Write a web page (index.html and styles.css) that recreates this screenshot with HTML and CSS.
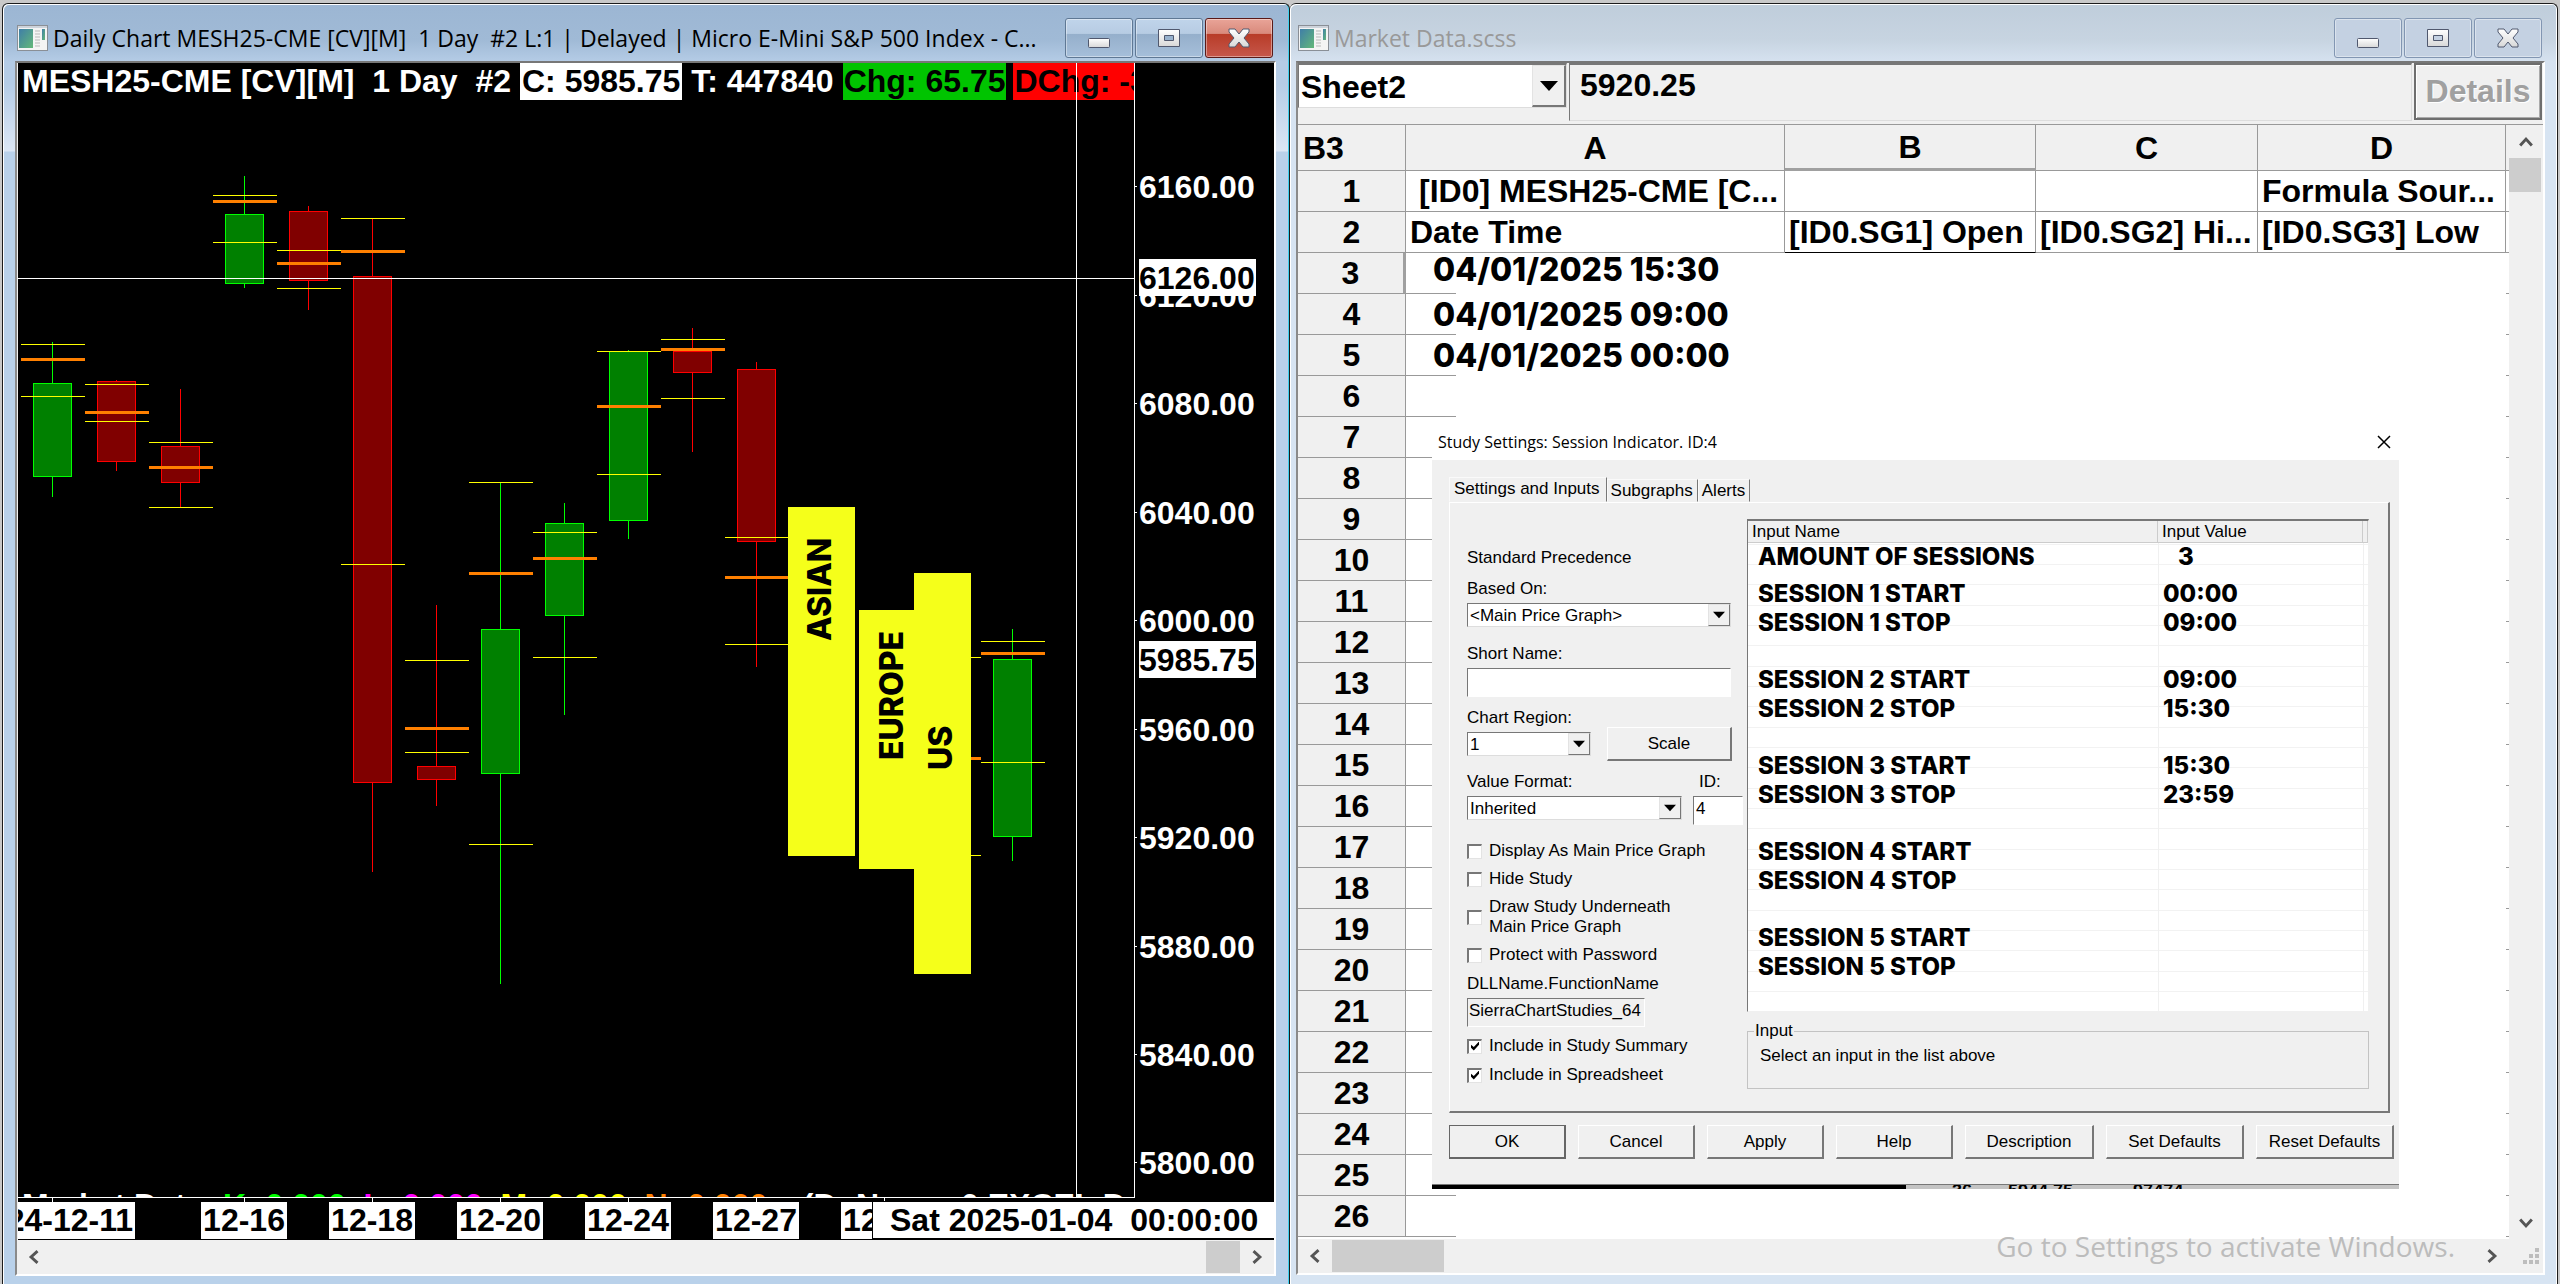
FILE: index.html
```
<!DOCTYPE html>
<html lang="en">
<head>
<meta charset="utf-8">
<title>Daily Chart and Market Data</title>
<link rel="stylesheet" href="styles.css">
</head>
<body>
<svg class="defs" width="0" height="0" aria-hidden="true">
  <defs>
    <linearGradient id="pane" x1="0" y1="0" x2="1" y2="1"><stop offset="0" stop-color="#3f7ea8"/><stop offset="1" stop-color="#63b878"/></linearGradient>
    <linearGradient id="metal" x1="0" y1="0" x2="0" y2="1"><stop offset="0" stop-color="#ffffff"/><stop offset="1" stop-color="#d8d8d8"/></linearGradient>
    <symbol id="app" viewBox="0 0 31 26">
      <rect x="0.5" y="0.5" width="30" height="25" fill="#f4f4f4" stroke="#8a8f96"/>
      <rect x="1" y="1" width="29" height="2" fill="#cdd3db"/>
      <rect x="2" y="4" width="14" height="19" fill="url(#pane)"/>
      <path d="M18 6h5M18 9h5M18 12h5M18 15h5M18 18h5M18 21h5" stroke="#b9b9b9"/>
      <rect x="25" y="4" width="3" height="11" fill="url(#pane)"/>
    </symbol>
    <symbol id="min" viewBox="0 0 22 20"><rect x="0.5" y="10.5" width="21" height="9" rx="1" fill="url(#metal)" stroke="#50586e"/></symbol>
    <symbol id="max" viewBox="0 0 22 20"><path d="M0.5 1.5h21v17h-21zM6.5 7.5v5h9v-5z" fill="url(#metal)" fill-rule="evenodd" stroke="#50586e"/></symbol>
    <symbol id="close" viewBox="0 0 22 20"><path d="M1 1h6l4 5 4-5h6v3l-5 6 5 6v3h-6l-4-5-4 5H1v-3l5-6-5-6z" fill="url(#metal)" stroke="#50586e"/></symbol>
    <symbol id="drop" viewBox="0 0 18 10"><path d="M0 0h18L9 10z"/></symbol>
    <symbol id="chev" viewBox="0 0 12 12"><path d="M9 1L3.500 6L9 11" fill="none" stroke="#555" stroke-width="2.500"/></symbol>
  </defs>
</svg>
<main class="desktop">
  <section class="window active">
    <header class="titlebar">
      <svg class="appicon" aria-hidden="true"><use href="#app"/></svg>
      <h1>Daily Chart MESH25-CME [CV][M]&nbsp; 1 Day&nbsp; #2 L:1 | Delayed | Micro E-Mini S&amp;P 500 Index - C...</h1>
      <div class="controls">
        <button aria-label="Minimize"><svg><use href="#min"/></svg></button>
        <button aria-label="Maximize"><svg><use href="#max"/></svg></button>
        <button class="close" aria-label="Close"><svg><use href="#close"/></svg></button>
      </div>
    </header>
    <div class="client">
      <div class="chart">
        <div class="plot">
          <div class="readout"><span>MESH25-CME [CV][M]  1 Day  #2</span><span class="last">C: 5985.75</span><span>T: 447840</span><span class="up">Chg: 65.75</span><span class="down">DChg: -30.00</span></div>
          <svg class="canvas" id="candles" role="img" aria-label="Daily candles with sessions"></svg>
          <div class="study"><span>Market Data: </span><span class="k">K: 0.000  </span><span class="l">L: 0.000  </span><span class="m">M: 0.000  </span><span class="n">N: 0.000    </span><span>(D: Name  0 EXCEL D</span></div>
        </div>
        <svg class="scale" id="scale"></svg>
        <div class="dates">
          <span class="tick"><b>2024-12-11</b></span><span class="skip"></span><span class="tick"><b>12-16</b></span><span class="tick"><b>12-18</b></span><span class="tick"><b>12-20</b></span><span class="tick"><b>12-24</b></span><span class="tick"><b>12-27</b></span><span class="tick"><b>12-31</b></span>
          <output class="cursor">Sat 2025-01-04  00:00:00</output>
        </div>
      </div>
      <div class="hbar">
        <button aria-label="Scroll left"><svg><use href="#chev"/></svg></button>
        <i class="thumb end"></i>
        <button class="flip" aria-label="Scroll right"><svg><use href="#chev"/></svg></button>
      </div>
    </div>
  </section>

  <section class="window inactive">
    <header class="titlebar">
      <svg class="appicon" aria-hidden="true"><use href="#app"/></svg>
      <h1>Market Data.scss</h1>
      <div class="controls">
        <button aria-label="Minimize"><svg><use href="#min"/></svg></button>
        <button aria-label="Maximize"><svg><use href="#max"/></svg></button>
        <button aria-label="Close"><svg><use href="#close"/></svg></button>
      </div>
    </header>
    <div class="client">
      <div class="formula">
        <span class="combo sheetname"><select aria-label="Sheet"><option>Sheet2</option></select><span class="drop"><svg><use href="#drop"/></svg></span></span>
        <input class="value" aria-label="Cell value" value="5920.25">
        <button class="details" disabled>Details</button>
      </div>
      <div class="sheet">
        <div class="grid">
          <table class="cells" id="cells">
            <colgroup><col class="c0"><col class="ca"><col class="cb"><col class="cc"><col class="cd"><col></colgroup>
            <thead><tr><th class="ref">B3</th><th>A</th><th class="sel">B</th><th>C</th><th>D</th><th></th></tr></thead>
            <tbody>
              <tr class="lined"><th>1</th><td class="indent">[ID0] MESH25-CME [C...</td><td></td><td></td><td>Formula Sour...</td><td></td></tr>
              <tr class="lined"><th>2</th><td>Date Time</td><td class="cellsel">[ID0.SG1] Open</td><td>[ID0.SG2] Hi...</td><td>[ID0.SG3] Low</td><td></td></tr>
              <tr><th class="sel">3</th><td class="stamp high">04/01/2025 15:30</td><td></td><td></td><td></td><td></td></tr>
              <tr><th>4</th><td class="stamp">04/01/2025 09:00</td><td></td><td></td><td></td><td></td></tr>
              <tr><th>5</th><td class="stamp">04/01/2025 00:00</td><td></td><td></td><td></td><td></td></tr>
            </tbody>
          </table>
          <form class="dialog" onsubmit="return false">
            <header class="caption"><h2>Study Settings: Session Indicator. ID:4</h2>
              <button type="button" aria-label="Close"><svg viewBox="0 0 14 14"><path d="M1 1l12 12M13 1L1 13" stroke="#000" stroke-width="1.500"/></svg></button></header>
            <div class="body">
              <nav class="tabs"><button type="button" class="on">Settings and Inputs</button><button type="button">Subgraphs</button><button type="button">Alerts</button></nav>
              <div class="panel">
                <div class="options">
                  <p>Standard Precedence</p>
                  <label class="field">Based On:<span class="combo"><select><option>&lt;Main Price Graph&gt;</option></select><span class="drop"><svg><use href="#drop"/></svg></span></span></label>
                  <label class="field short">Short Name:<input type="text"></label>
                  <div class="pair region">
                    <label class="field">Chart Region:<span class="combo"><select><option>1</option></select><span class="drop"><svg><use href="#drop"/></svg></span></span></label>
                    <button type="button" class="push">Scale</button>
                  </div>
                  <div class="pair format">
                    <label class="field">Value Format:<span class="combo"><select><option>Inherited</option></select><span class="drop"><svg><use href="#drop"/></svg></span></span></label>
                    <label class="field id"><span class="idlabel">ID:</span><input type="text" value="4"></label>
                  </div>
                  <div class="checks">
                    <label><input type="checkbox">Display As Main Price Graph</label>
                    <label><input type="checkbox">Hide Study</label>
                    <label><input type="checkbox">Draw Study Underneath<br>Main Price Graph</label>
                    <label><input type="checkbox">Protect with Password</label>
                  </div>
                  <label class="field dll">DLLName.FunctionName<input type="text" readonly value="SierraChartStudies_64"></label>
                  <div class="checks include">
                    <label><input type="checkbox" checked>Include in Study Summary</label>
                    <label><input type="checkbox" checked>Include in Spreadsheet</label>
                  </div>
                </div>
                <div class="inputs">
                  <div class="list">
                    <table>
                      <colgroup><col><col class="val"><col class="pad"></colgroup>
                      <thead><tr><th>Input Name</th><th>Input Value</th><th></th></tr></thead>
                      <tbody>
                        <tr class="count"><td>AMOUNT OF SESSIONS</td><td>3</td><td></td></tr>
                        <tr><td>SESSION 1 START</td><td>00:00</td><td></td></tr>
                        <tr><td>SESSION 1 STOP</td><td>09:00</td><td></td></tr>
                        <tr class="start"><td>SESSION 2 START</td><td>09:00</td><td></td></tr>
                        <tr><td>SESSION 2 STOP</td><td>15:30</td><td></td></tr>
                        <tr class="start"><td>SESSION 3 START</td><td>15:30</td><td></td></tr>
                        <tr><td>SESSION 3 STOP</td><td>23:59</td><td></td></tr>
                        <tr class="start"><td>SESSION 4 START</td><td></td><td></td></tr>
                        <tr><td>SESSION 4 STOP</td><td></td><td></td></tr>
                        <tr class="start"><td>SESSION 5 START</td><td></td><td></td></tr>
                        <tr><td>SESSION 5 STOP</td><td></td><td></td></tr>
                      </tbody>
                    </table>
                  </div>
                  <fieldset><legend>Input</legend>Select an input in the list above</fieldset>
                </div>
              </div>
              <footer class="actions">
                <button class="push default">OK</button><button type="button" class="push">Cancel</button><button type="button" class="push">Apply</button><button type="button" class="push">Help</button><button type="button" class="push wide">Description</button><button type="button" class="push wider">Set Defaults</button><button type="button" class="push wider">Reset Defaults</button>
              </footer>
            </div>
            <div class="behind"><span class="dark"></span><span>36</span><span>5944.75</span><span>97474</span></div>
          </form>
        </div>
        <div class="vbar">
          <button class="up" aria-label="Scroll up"><svg><use href="#chev"/></svg></button>
          <i class="thumb"></i>
          <button class="dn" aria-label="Scroll down"><svg><use href="#chev"/></svg></button>
        </div>
      </div>
      <div class="hbar">
        <button aria-label="Scroll left"><svg><use href="#chev"/></svg></button>
        <i class="thumb"></i>
        <button class="flip" aria-label="Scroll right"><svg><use href="#chev"/></svg></button>
        <svg class="grip" viewBox="0 0 16 16" fill="#bdbdbd"><path d="M12 0h4v4h-4zM6 6h4v4H6zM12 6h4v4h-4zM0 12h4v4H0zM6 12h4v4H6zM12 12h4v4h-4z"/></svg>
      </div>
      <p class="watermark">Go to Settings to activate Windows.</p>
    </div>
  </section>
</main>
<script src="script.js"></script>
</body>
</html>
```
FILE: styles.css
```
* { box-sizing: border-box; }
body { margin: 0; background: #c9c9c9; font-family: "Liberation Sans", Arial, sans-serif; color: #000; }
h1, h2, p { margin: 0; font-weight: 400; }
button { font: inherit; color: inherit; padding: 0; margin: 0; border: 0; background: none; display: flex; align-items: center; justify-content: center; }
input, select { font: inherit; color: inherit; margin: 0; border-radius: 0; min-width: 0; }
.defs { position: absolute; }

.desktop { display: grid; grid-template-columns: 1287fr 1269fr; height: 100vh; min-height: 1284px; padding: 3px 0 0 2px; overflow: hidden; }
.window { display: flex; flex-direction: column; min-width: 0; border: solid #1c1c1c; border-width: 1px 1px 0; border-radius: 6px 6px 0 0; padding: 0 13px 8px 12px; }
.active { background: linear-gradient(#9cb6d3, #a0bad6 36px, #b5cce6 58px, #b5cce6 80px, #dce7f5 147px, #b9d1ea 148px); box-shadow: inset 1px 1px #fff, inset -1px 0 #3fd0ee; }
.inactive { background: linear-gradient(#bfcddb, #c7d4e1 36px, #d6e2f0 58px, #d7e4f2 80px); box-shadow: inset 1px 1px #fff, inset -1px 0 #fff; padding: 0 12px 9px 6px; margin-right: 2px; border-left: 0; }
.titlebar { display: flex; align-items: center; height: 57px; padding: 11px 3px 0 0; flex: none; }
.appicon { width: 31px; height: 26px; margin-left: 2px; flex: none; }
.titlebar h1 { flex: 1; min-width: 0; margin-left: 5px; font: 23px/28px "Open Sans", sans-serif; white-space: nowrap; }
.inactive h1 { color: #999; }
.controls { display: flex; gap: 2px; }
.controls button { width: 68px; height: 40px; border: 1px solid #5f7894; border-radius: 3px; background: linear-gradient(#c0d4ea, #b7cce3 38%, #95afcb 40%, #a6bfda); box-shadow: inset 0 0 0 1px #ffffff66; }
.controls svg { width: 22px; height: 20px; }
.controls .close { border-color: #5a1a18; background: linear-gradient(#e9a498, #d98a7c 38%, #b83c28 40%, #c6574a); }
.inactive .controls button { border-color: #8296b2; background: #c4d1e2; }
.client { position: relative; flex: 1; min-height: 0; display: flex; flex-direction: column; border: 2px solid #fff; border-top-color: #777; border-left-color: #8a8a8a; background: #f0f0f0; }

/* chart */
.chart { flex: 1; min-height: 0; display: grid; grid-template: minmax(0, 1fr) 42px / minmax(0, 1fr) 139px; background: #000; color: #fff; font-weight: 700; font-size: 32px; line-height: 37px; overflow: hidden; margin-left: 1px; }
.plot { position: relative; min-width: 0; overflow: hidden; border: solid #fff; border-width: 0 1px 1px 0; }
.readout { display: flex; gap: 7px; padding-left: 2px; white-space: pre; }
.readout span { padding: 0 2px; flex: none; }
.readout .last { background: #fff; color: #000; }
.readout .up { background: #00c400; color: #000; padding: 0 1px; }
.readout .down { background: #f00; color: #000; padding: 0 1px; }
.canvas { position: absolute; inset: 0; width: 100%; height: 100%; }
.canvas text { font: 800 32px Inter, sans-serif; }
.scale { width: 100%; height: 100%; }
.scale text { font: 700 32px "Liberation Sans", Arial, sans-serif; fill: #fff; }
.scale .boxed { fill: #000; }
.study { position: absolute; left: 4px; bottom: 0; height: 4px; overflow: hidden; white-space: pre; line-height: 24px; }
.study .k { color: #0f0; } .study .l { color: #f0f; } .study .m { color: #ff0; } .study .n { color: #ff8000; }
.dates { position: relative; grid-column: 1 / -1; display: flex; margin-left: -30px; color: #000; white-space: pre; }
.tick { flex: 0 0 128px; min-width: 0; display: flex; flex-direction: column; align-items: center; }
.tick::before { content: ""; width: 1px; height: 4px; background: #fff; }
.tick b { background: #fff; padding: 0 2px; flex: none; }
.skip { flex: 0 0 64px; }
.cursor { position: absolute; right: 0; top: 4px; width: 401px; padding-left: 17px; background: #fff; outline: 1px solid #000; line-height: 36px; }

/* scroll bars */
.hbar { display: flex; align-items: center; height: 34px; flex: none; background: #f0f0f0; }
.hbar button { width: 34px; height: 34px; }
.hbar svg, .vbar svg { width: 14px; height: 14px; }
.thumb { background: #cdcdcd; width: 112px; height: 32px; }
.thumb.end { width: 34px; margin-left: auto; margin-right: 0; }
.flip svg { transform: rotate(180deg); }
.inactive .hbar .flip { margin-left: auto; }
.hbar .grip { width: 16px; height: 16px; margin: 0 4px 0 14px; align-self: center; }
.vbar { width: 34px; flex: none; display: flex; flex-direction: column; background: #f0f0f0; }
.vbar .thumb { width: 32px; height: 34px; }
.vbar button { height: 33px; width: 34px; }
.vbar .up svg { transform: rotate(90deg); }
.dn { margin-top: auto; }
.dn svg { transform: rotate(-90deg); }

/* spreadsheet */
.formula { display: flex; gap: 2px; height: 62px; padding-right: 1px; border-bottom: 1px solid #999; font-size: 32px; font-weight: 700; flex: none; }
.combo { display: flex; border: 1px solid; border-color: #777 #ddd #ddd #777; background: #fff; }
.combo select { appearance: none; flex: 1; border: 0; background: none; padding: 1px 2px 0; outline: 0; }
.drop { display: flex; align-items: center; justify-content: center; background: #f0f0f0; border: 1px solid; border-color: #e3e3e3 #777 #777 #e3e3e3; width: 22px; flex: none; }
.drop svg { width: 12px; height: 8px; }
.sheetname { width: 269px; height: 45px; border-width: 2px 1px 1px; }
.sheetname .drop { width: 34px; border-width: 1px 2px 2px 1px; }
.sheetname .drop svg { width: 18px; height: 10px; }
.value { flex: 1; height: 58px; border: 1px solid; border-color: #777 #ddd #ddd #777; border-top-width: 2px; background: #f0f0f0; padding: 0 10px 15px; }
.details { width: 128px; height: 57px; border: 2px solid #6e6e6e; color: #a0a0a0; text-shadow: 1px 1px #fff; box-shadow: inset 1px 1px #fff, inset -1px -1px #aaa; }
.sheet { flex: 1; min-height: 0; display: flex; background: #fff; }
.grid { flex: 1; min-width: 0; position: relative; overflow: hidden; }
.cells { width: 100%; table-layout: fixed; border-spacing: 0; font-size: 32px; font-weight: 700; line-height: 38px; white-space: nowrap; }
.c0 { width: 108px; } .ca { width: 379px; } .cb { width: 251px; } .cc { width: 222px; } .cd { width: 248px; }
.cells th, .cells td { padding: 0; overflow: hidden; height: 41px; }
.cells td { padding-left: 4px; text-align: left; }
.cells th { background: #f0f0f0; border: solid #999; border-width: 0 1px 1px 0; }
.cells thead th { height: 46px; }
.cells thead th:last-child, .cells td:last-child { border-right: 0; }
.cells .ref { text-align: left; padding-left: 5px; }
.cells thead .sel { border-bottom: 3px solid #a0a0a0; }
.cells tbody .sel { border-right: 3px solid #a0a0a0; }
.lined td { border: solid #999; border-width: 0 1px 1px 0; }
.lined .cellsel { border-bottom-color: #000; }
.cells .indent { padding-left: 13px; }
.cells tr:not(.lined) td:nth-child(2) { background: linear-gradient(#999, #999) 0 100% / 50px 1px no-repeat; }
.cells tr:not(.lined) td:last-child { background: linear-gradient(#999, #999) 0 100% / 3px 1px no-repeat; }
.cells .stamp { font-family: Inter, sans-serif; font-weight: 800; padding-left: 27px; }
.cells .high { vertical-align: top; line-height: 34px; }
.watermark { position: absolute; right: 88px; bottom: 8px; font: 28px/38px "Open Sans", sans-serif; color: #bcbcbc; }

/* study settings dialog */
.dialog { position: absolute; left: 134px; top: 295px; width: 967px; background: #f0f0f0; font-size: 17px; line-height: 20px; }
.caption { display: flex; align-items: center; justify-content: space-between; height: 40px; padding: 3px 8px 0 6px; background: #fff; }
.caption h2 { font: 16px/22px "Open Sans", sans-serif; }
.caption svg { width: 14px; height: 14px; }
.body { padding: 17px 9px 25px 17px; border-bottom: 1px solid #777; }
.tabs { display: flex; align-items: end; height: 25px; }
.tabs button { height: 23px; padding: 0 4px 0 3px; border: 1px solid; border-color: #fafafa #777 #f0f0f0 #fafafa; }
.tabs .on { height: 25px; padding: 0 6px 1px 4px; }
.panel { display: flex; width: 941px; height: 611px; padding: 16px 19px 0 17px; border: 1px solid; border-color: #fff #777 #777 #fff; border-width: 1px 2px 2px 1px; }
.options { width: 280px; padding-top: 29px; flex: none; }
.field { display: flex; flex-direction: column; gap: 4px; margin-top: 11px; width: 264px; }
.field .combo { height: 24px; }
.field input { height: 29px; border: 1px solid; border-color: #777 #fff #fff #777; padding: 0 2px 3px; background: #fff; }
.field.short { margin-top: 17px; }
.pair { display: flex; justify-content: space-between; width: 265px; }
.region .field { width: 124px; }
.region .push { width: 125px; align-self: end; }
.region { height: 64px; }
.format { width: 276px; }
.format .field { width: 215px; }
.format .id { width: 50px; }
.idlabel { padding-left: 6px; }
.checks { display: flex; flex-direction: column; gap: 8px; margin-top: 16px; }
.checks label { display: flex; align-items: center; gap: 7px; }
.checks input { appearance: none; width: 15px; height: 15px; background: #fff; border: solid #777; border-width: 2px 1px 1px 2px; border-right-color: #e3e3e3; border-bottom-color: #e3e3e3; }
.checks input:checked::before { content: ""; display: block; width: 8px; height: 9px; margin: 1px 2px; background: #000; clip-path: polygon(0 35%, 35% 60%, 100% 0, 100% 35%, 35% 100%, 0 70%); }
.include { margin-top: 9px; gap: 9px; }
.field.dll { margin-top: 9px; width: 178px; }
.dll input { background: #f0f0f0; padding: 0 0 4px 1px; }
.inputs { flex: 1; min-width: 0; display: flex; flex-direction: column; gap: 9px; }
.list { height: 493px; background: #fff; border: 1px solid; border-color: #777 #f0f0f0 #f0f0f0 #777; border-top-width: 2px; }
.list table { width: 100%; height: 490px; table-layout: fixed; border-spacing: 0; background: linear-gradient(#f0f0f0, #f0f0f0) 410px 0 / 1px 100% no-repeat, linear-gradient(#f0f0f0, #f0f0f0) 615px 0 / 1px 100% no-repeat, linear-gradient(#f2f2f2 1px, #0000 1px 20px, #f2f2f2 20px 21px, #0000 21px 41px, #f2f2f2 41px 42px, #0000 42px) 0 43px / 100% 61px; }
.list .val { width: 205px; } .list .pad { width: 5px; }
.list th { height: 22px; padding: 1px 0 0 4px; text-align: left; font-weight: 400; background: #f0f0f0; border: solid #ccc; border-width: 0 1px 1px 0; }
.list td { height: 29px; padding: 0 0 0 10px; font: 800 24px/28px Inter, sans-serif; vertical-align: top; }
.list td + td { padding-left: 5px; }
.list .count td { height: 37px; }
.list .count td + td { padding-left: 20px; }
.list tr.start td { padding-top: 28px; height: 57px; }
.list tr:last-child td { height: auto; }
fieldset { margin: 0; height: 68px; padding: 5px 12px; border: 1px solid #c3c3c3; }
legend { padding: 0 1px; margin-left: -6px; }
.push { height: 34px; border: 1px solid; border-color: #fff #777 #777 #fff; border-right-width: 2px; border-bottom-width: 2px; flex: none; }
.actions { display: flex; gap: 12px; margin-top: 12px; }
.actions .push { width: 117px; }
.actions .default { border-color: #666; }
.actions .wide { width: 129px; }
.actions .wider { width: 138px; }
.behind { display: flex; gap: 36px; height: 4px; overflow: hidden; background: #c4c4c4; font-size: 18px; font-weight: 700; line-height: 13px; }
.behind .dark { width: 474px; background: #000; margin-right: 10px; }
.behind span:nth-child(4) { margin-left: 24px; }
```
FILE: script.js
```
// Plot coordinates are window pixels; the plot's own corner is at (18, 63).
var OX = 18, OY = 63;
var out = [];
function rect(x, y, w, h, fill, extra) {
  out.push('<rect x="' + (x - OX) + '" y="' + (y - OY) + '" width="' + w + '" height="' + h + '" fill="' + fill + '" ' + (extra || '') + '/>');
}
// centre, up?, high, body top, body bottom, low, thin lines, thick line
var bars = [
  [52, 1, 342, 383, 477, 497, [344, 396], 359],
  [116, 0, 380, 381, 462, 471, [384, 421], 412],
  [180, 0, 389, 446, 483, 507, [442, 507], 467],
  [244, 1, 176, 214, 284, 288, [195, 242], 201],
  [308, 0, 206, 211, 281, 310, [250, 288], 263],
  [372, 0, 218, 276, 783, 872, [218, 564], 251],
  [436, 0, 605, 766, 780, 806, [660, 752], 728],
  [500, 1, 482, 629, 774, 984, [482, 844], 573],
  [564, 1, 503, 523, 616, 715, [532, 657], 558],
  [628, 1, 350, 351, 521, 539, [351, 474], 406],
  [692, 0, 328, 351, 373, 452, [339, 398], 349],
  [756, 0, 362, 369, 542, 667, [537, 644], 577],
  [820, 0, 700, 720, 820, 830, [721, 834], 819],
  [948, 0, 660, 720, 820, 830, [657, 855], 758],
  [1012, 1, 629, 659, 837, 861, [641, 762], 653]
];
bars.forEach(function (b) {
  var line = b[1] ? '#00ff00' : '#ff0000', body = b[1] ? '#008000' : '#800000';
  rect(b[0], b[2], 1, b[5] - b[2], line);
  rect(b[0] - 19 + 0.5, b[3] + 0.5, 38, b[4] - b[3] - 1, body, 'stroke="' + line + '"');
  b[6].forEach(function (y) { rect(b[0] - 31, y, 64, 1, '#ffff00'); });
  rect(b[0] - 31, b[7] - 1, 64, 3, '#ff8000');
});
rect(18, 278, 1117, 1, '#fff');
rect(1076, 63, 1, 1136, '#fff');
[['ASIAN', 788, 507, 67, 349, 831, 641], ['EUROPE', 859, 610, 56, 259, 903, 760], ['US', 914, 573, 57, 401, 952, 770]].forEach(function (s) {
  rect(s[1], s[2], s[3], s[4], '#f5ff1a');
  out.push('<text transform="translate(' + (s[5] - OX) + ',' + (s[6] - OY) + ') rotate(-90)">' + s[0] + '</text>');
});
document.getElementById('candles').innerHTML = out.join('');

var axis = '';
[[6160, 186], [6120, 295], [6080, 403], [6040, 512], [6000, 620], [5960, 729], [5920, 837], [5880, 946], [5840, 1054], [5800, 1162]].forEach(function (t) {
  axis += '<rect x="0" y="' + (t[1] - OY) + '" width="2" height="1" fill="#fff"/><text x="4" y="' + (t[1] - OY + 12) + '">' + t[0] + '.00</text>';
});
[['6126.00', 278], ['5985.75', 660]].forEach(function (t) {
  axis += '<rect x="4" y="' + (t[1] - OY - 19) + '" width="117" height="37" fill="#fff"/><text class="boxed" x="4" y="' + (t[1] - OY + 11) + '">' + t[0] + '</text>';
});
document.getElementById('scale').innerHTML = axis;

// Empty rows down to the end of the sheet.
var body = document.querySelector('#cells tbody'), rows = '';
for (var r = 6; r <= 26; r++) rows += '<tr><th>' + r + '</th><td></td><td></td><td></td><td></td><td></td></tr>';
body.insertAdjacentHTML('beforeend', rows);
```
